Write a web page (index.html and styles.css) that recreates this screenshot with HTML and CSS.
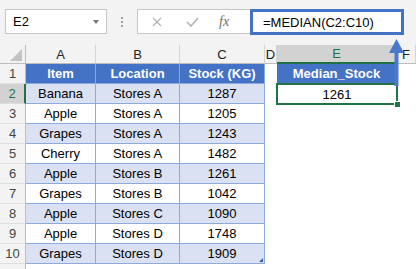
FILE: index.html
```html
<!DOCTYPE html>
<html lang="en">
<head>
  <meta charset="UTF-8" />
  <title>MEDIAN example</title>
  <link rel="stylesheet" href="styles.css">
</head>
<body>

  <div class="formula-row">
    <div class="name-box"><span>E2</span><span class="caret"></span></div>
    <div class="grip"><i></i><i></i><i></i></div>
    <div class="fx-box">
      <svg class="cancel" width="10" height="10" viewBox="0 0 10 10"><path d="M1 1L9 9M9 1L1 9" stroke="#b3b3b3" stroke-width="1.3" fill="none"/></svg>
      <svg class="enter" width="13" height="10" viewBox="0 0 13 10"><path d="M1 5L5 9L12 1" stroke="#b3b3b3" stroke-width="1.6" fill="none"/></svg>
      <span class="fx">fx</span>
    </div>
    <div class="formula-input">=MEDIAN(C2:C10)</div>
  </div>

  <div class="sheet">
    <div class="c ch corner"><span class="tri"></span></div>
    <div class="c ch">A</div>
    <div class="c ch">B</div>
    <div class="c ch">C</div>
    <div class="c ch">D</div>
    <div class="c ch sel">E</div>
    <div class="c ch">F</div>

    <div class="c rh">1</div>
    <div class="c th">Item</div>
    <div class="c th">Location</div>
    <div class="c th">Stock (KG)</div>
    <div class="c"></div>
    <div class="c th">Median_Stock</div>
    <div class="c"></div>

    <div class="c rh sel">2</div>
    <div class="c td band">Banana</div>
    <div class="c td band">Stores A</div>
    <div class="c td band">1287</div>
    <div class="c"></div>
    <div class="c active">1261</div>
    <div class="c"></div>

    <div class="c rh">3</div>
    <div class="c td">Apple</div>
    <div class="c td">Stores A</div>
    <div class="c td">1205</div>
    <div class="c"></div>
    <div class="c"></div>
    <div class="c"></div>

    <div class="c rh">4</div>
    <div class="c td band">Grapes</div>
    <div class="c td band">Stores A</div>
    <div class="c td band">1243</div>
    <div class="c"></div>
    <div class="c"></div>
    <div class="c"></div>

    <div class="c rh">5</div>
    <div class="c td">Cherry</div>
    <div class="c td">Stores A</div>
    <div class="c td">1482</div>
    <div class="c"></div>
    <div class="c"></div>
    <div class="c"></div>

    <div class="c rh">6</div>
    <div class="c td band">Apple</div>
    <div class="c td band">Stores B</div>
    <div class="c td band">1261</div>
    <div class="c"></div>
    <div class="c"></div>
    <div class="c"></div>

    <div class="c rh">7</div>
    <div class="c td">Grapes</div>
    <div class="c td">Stores B</div>
    <div class="c td">1042</div>
    <div class="c"></div>
    <div class="c"></div>
    <div class="c"></div>

    <div class="c rh">8</div>
    <div class="c td band">Apple</div>
    <div class="c td band">Stores C</div>
    <div class="c td band">1090</div>
    <div class="c"></div>
    <div class="c"></div>
    <div class="c"></div>

    <div class="c rh">9</div>
    <div class="c td">Apple</div>
    <div class="c td">Stores D</div>
    <div class="c td">1748</div>
    <div class="c"></div>
    <div class="c"></div>
    <div class="c"></div>

    <div class="c rh">10</div>
    <div class="c td band">Grapes</div>
    <div class="c td band">Stores D</div>
    <div class="c td band table-end">1909</div>
    <div class="c"></div>
    <div class="c"></div>
    <div class="c"></div>

    <div class="c rh"></div>
    <div class="c"></div>
    <div class="c"></div>
    <div class="c"></div>
    <div class="c"></div>
    <div class="c"></div>
    <div class="c"></div>
  </div>

  <svg class="arrow" width="15" height="47" viewBox="0 0 15 47">
    <polygon points="7.5,0 0,14 15,14" fill="#4a78cc"/>
    <rect x="5.5" y="13" width="4" height="34" fill="#4a78cc"/>
  </svg>

</body>
</html>
```

FILE: styles.css
```css
body {
  margin: 0;
  position: relative;
  height: 269px;
  overflow: hidden;
  font-family: "Liberation Sans", Arial, sans-serif;
  font-size: 13px;
  color: #000;
  background: #fff;
}
.formula-row {
  display: flex;
  align-items: flex-start;
  height: 45px;
  box-sizing: border-box;
  padding: 9px 0 0 5px;
  background: #f3f3f3;
}
.name-box {
  width: 102px;
  height: 25px;
  box-sizing: border-box;
  display: flex;
  align-items: center;
  justify-content: space-between;
  padding: 0 7px;
  border: 1px solid #c6c6c6;
  background: #fff;
}
.caret {
  width: 0;
  height: 0;
  border-left: 3.5px solid transparent;
  border-right: 3.5px solid transparent;
  border-top: 4px solid #777;
}
.grip {
  display: flex;
  flex-direction: column;
  gap: 2px;
  margin: 8px 0 0 14px;
}
.grip i {
  width: 2px;
  height: 2px;
  background: #a0a0a0;
}
.fx-box {
  width: 113px;
  height: 25px;
  box-sizing: border-box;
  display: flex;
  align-items: center;
  margin-left: 14px;
  padding-left: 14px;
  border: 1px solid #c6c6c6;
  border-right: none;
  background: #fff;
}
.enter {
  margin-left: 24px;
}
.fx {
  margin-left: 20px;
  font-family: "Liberation Serif", serif;
  font-style: italic;
  font-size: 14px;
  color: #707070;
}
.formula-input {
  width: 154px;
  height: 26px;
  box-sizing: border-box;
  display: flex;
  align-items: center;
  padding-left: 10px;
  border: 3px solid #4472c4;
  background: #fff;
}
.sheet {
  display: grid;
  grid-template-columns: 26px 70px 84px 85px 12px 120px 19px;
  grid-template-rows: 19px;
  grid-auto-rows: 20px;
}
.c {
  display: flex;
  align-items: center;
  justify-content: center;
  box-sizing: border-box;
  white-space: nowrap;
}
.ch {
  background: #f3f3f3;
  border-right: 1px solid #d4d4d4;
  border-bottom: 1px solid #bdbdbd;
  color: #222;
}
.ch.sel {
  background: #d2d2d2;
  border-bottom: 2px solid #217346;
  color: #217346;
}
.corner {
  justify-content: flex-end;
  align-items: flex-end;
  padding: 0 3px 2px 0;
  border-right-color: #bdbdbd;
}
.tri {
  width: 0;
  height: 0;
  border-left: 12px solid transparent;
  border-bottom: 12px solid #c3c3c3;
}
.rh {
  background: #f3f3f3;
  border-right: 1px solid #bdbdbd;
  border-bottom: 1px solid #dedede;
  color: #444;
}
.rh.sel {
  background: #d2d2d2;
  border-right: 2px solid #217346;
  color: #217346;
}
.th {
  background: #4472c4;
  color: #fff;
  font-weight: bold;
  border-right: 1px solid #8ea9db;
  border-bottom: 1px solid #8ea9db;
}
.td {
  border-right: 1px solid #8ea9db;
  border-bottom: 1px solid #8ea9db;
}
.band {
  background: #d9e1f2;
}
.table-end {
  position: relative;
}
.table-end::after {
  content: "";
  position: absolute;
  right: 1px;
  bottom: 1px;
  border-left: 4px solid transparent;
  border-bottom: 4px solid #3a5fa8;
}
.active {
  position: relative;
}
.active::after {
  content: "";
  position: absolute;
  inset: -1px -1px -1px -1px;
  border: 2px solid #217346;
}
.active::before {
  content: "";
  position: absolute;
  right: -4px;
  bottom: -4px;
  width: 5px;
  height: 5px;
  background: #217346;
  border: 1px solid #fff;
  z-index: 1;
}
.arrow {
  position: absolute;
  left: 389px;
  top: 39px;
}
```
